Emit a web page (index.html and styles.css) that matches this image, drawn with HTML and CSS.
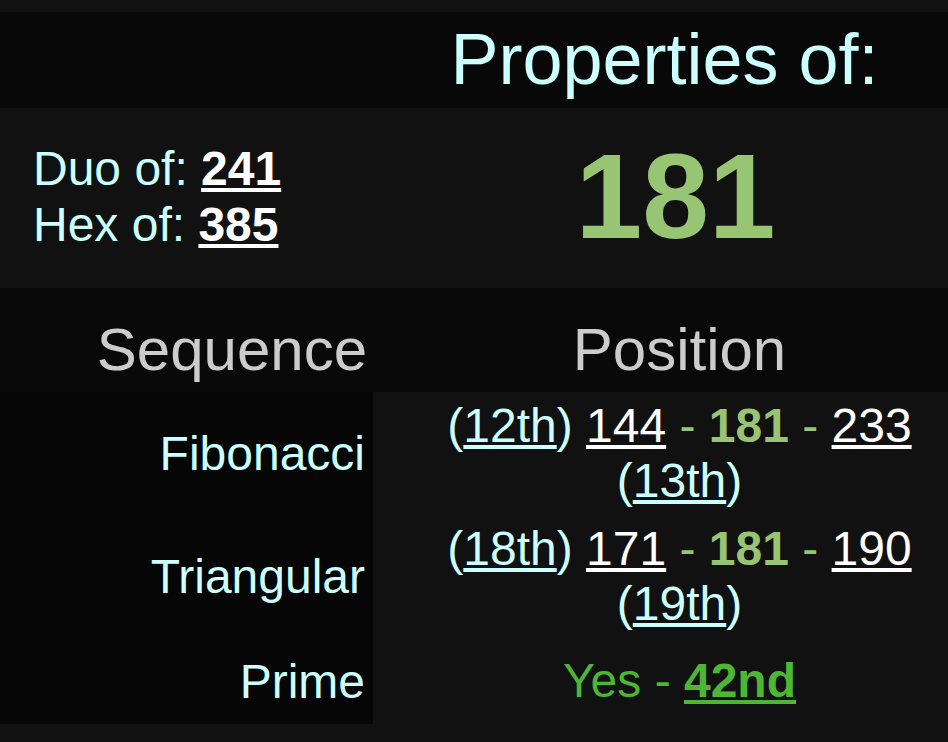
FILE: index.html
```html
<!DOCTYPE html>
<html lang="en">
<head>
<meta charset="utf-8">
<title>Properties of 181</title>
<link rel="stylesheet" href="styles.css">
</head>
<body>
<main class="props">
  <div class="row row-title">
    <div class="cell cell-empty"></div>
    <div class="cell title">Properties of:</div>
  </div>
  <div class="row row-main">
    <div class="cell relations">
      <div>Duo of: <a class="rel-link" href="#">241</a></div>
      <div>Hex of: <a class="rel-link" href="#">385</a></div>
    </div>
    <div class="cell number">181</div>
  </div>
  <div class="row row-head">
    <div class="cell head head-left">Sequence</div>
    <div class="cell head head-right">Position</div>
  </div>
  <div class="row row-data">
    <div class="cell label">Fibonacci</div>
    <div class="cell value">(<a class="pos" href="#">12th</a>) <a class="nb" href="#">144</a> <span class="cur">- <b>181</b> -</span> <a class="nb" href="#">233</a> (<a class="pos" href="#">13th</a>)</div>
  </div>
  <div class="row row-data">
    <div class="cell label">Triangular</div>
    <div class="cell value">(<a class="pos" href="#">18th</a>) <a class="nb" href="#">171</a> <span class="cur">- <b>181</b> -</span> <a class="nb" href="#">190</a> (<a class="pos" href="#">19th</a>)</div>
  </div>
  <div class="row row-data row-prime">
    <div class="cell label label-prime">Prime</div>
    <div class="cell value prime">Yes - <a class="prime-link" href="#">42nd</a></div>
  </div>
</main>
</body>
</html>
```
FILE: styles.css
```css
html, body {
  margin: 0;
  padding: 0;
  background: #111111;
}

body {
  font-family: "Liberation Sans", Arial, Helvetica, sans-serif;
  color: #ccffff;
  padding: 12px 0 18px;
}

.props {
  display: flex;
  flex-direction: column;
}

.row {
  display: grid;
  grid-template-columns: 373px 1fr;
}

.cell {
  box-sizing: border-box;
}

/* Title row */
.row-title {
  background: #080808;
}

.title {
  font-size: 72px;
  line-height: 83px;
  padding: 6px 0 7px 8px;
  text-align: center;
  color: #ccffff;
}

/* Main row */
.row-main {
  background: #111111;
}

.relations {
  display: flex;
  flex-direction: column;
  justify-content: center;
  padding-left: 33px;
  padding-bottom: 2px;
  font-size: 48px;
  line-height: 56px;
  color: #ccffff;
}

.rel-link {
  color: #ffffff;
  font-weight: bold;
  text-decoration: underline;
}

.number {
  font-size: 120px;
  line-height: 138px;
  font-weight: bold;
  color: #97c573;
  text-align: center;
  padding: 19px 0 23px 30px;
}

/* Header row */
.row-head {
  background: #090909;
}

.head {
  font-size: 60px;
  line-height: 69px;
  color: #cccccc;
  padding: 27px 0 8px;
}

.head-left {
  text-align: right;
  padding-right: 6px;
}

.head-right {
  text-align: center;
  padding-left: 38px;
}

/* Data rows */
.row-data {
  background: #111111;
}

.label {
  background: #060606;
  display: flex;
  align-items: center;
  justify-content: flex-end;
  padding: 0 8px 0 0;
  font-size: 48px;
  line-height: 55px;
  color: #ccffff;
}

.label-prime {
  padding-top: 16px;
  padding-bottom: 15px;
}

.value {
  align-self: center;
  text-align: center;
  font-size: 48px;
  line-height: 55px;
  color: #ccffff;
  padding: 6px 0 7px 38px;
}

.pos {
  color: #ccffff;
  text-decoration: underline;
}

.nb {
  color: #ffffff;
  text-decoration: underline;
}

.cur {
  color: #97c573;
}

.cur b {
  font-weight: bold;
}

.prime {
  color: #4db733;
}

.prime-link {
  color: #4db733;
  font-weight: bold;
  text-decoration: underline;
}
```
